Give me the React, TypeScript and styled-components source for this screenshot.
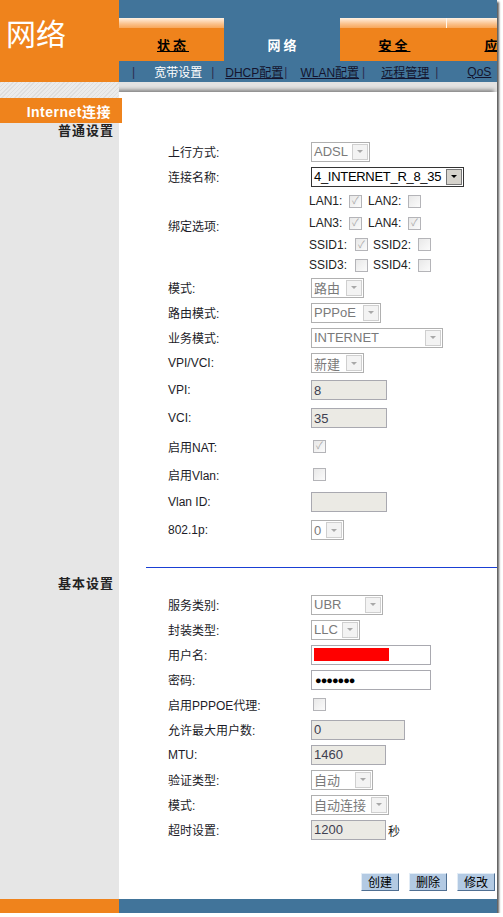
import React from 'react'
import styled, { createGlobalStyle } from 'styled-components'

const ORANGE = '#ef831c'
const BLUE = '#41749a'

const Global = createGlobalStyle`
  html, body { margin: 0; padding: 0; background: #fff; }
  body { font-family: "Liberation Sans", "Noto Sans CJK SC", sans-serif; }
`

const Frame = styled.div`
  width: 497px;
  height: 913px;
  display: grid;
  grid-template-columns: 119px 1fr;
  grid-template-rows: 82px 1fr 14px;
  box-shadow: 2px 2px 2px rgba(0, 0, 0, 0.65);
  overflow: hidden;
`

const Logo = styled.div`
  background: ${ORANGE};
  color: #fff;
  font-family: "Noto Sans CJK SC", sans-serif;
  font-size: 30px;
  line-height: 30px;
  padding: 17px 0 0 6px;
  box-sizing: border-box;
`

const Nav = styled.div`
  background: ${BLUE};
  display: flex;
  flex-direction: column;
  overflow: hidden;
`

const TabRow = styled.div`
  margin-top: 18px;
  height: 43px;
  display: flex;
`

const Tab = styled.div<{ $w: number; $active?: boolean; $sep?: boolean }>`
  flex: none;
  width: ${p => p.$w}px;
  display: flex;
  flex-direction: column;
  &::before {
    content: '';
    height: 10px;
    background: ${p => (p.$active ? 'transparent' : 'linear-gradient(#fff1e2, #fbc18a 60%, #f7a75a)')};
    border-left: ${p => (p.$sep ? '1px solid #fff8ee' : 'none')};
  }
`

const TabLabel = styled.span<{ $active?: boolean }>`
  flex: 1;
  display: flex;
  align-items: center;
  justify-content: center;
  background: ${p => (p.$active ? 'transparent' : ORANGE)};
  color: ${p => (p.$active ? '#fff' : '#000')};
  text-decoration: ${p => (p.$active ? 'none' : 'underline')};
  font-size: 13px;
  font-weight: bold;
  letter-spacing: 3px;
  padding-left: 3px;
`

const SubNav = styled.div`
  height: 21px;
  display: flex;
  align-items: center;
  font-size: 12px;
  white-space: nowrap;
`

const Sep = styled.span<{ $ml: number }>`
  margin-left: ${p => p.$ml}px;
  color: #2c2c4e;
`

const SubLink = styled.span<{ $ml: number; $active?: boolean }>`
  margin-left: ${p => p.$ml}px;
  color: ${p => (p.$active ? '#fff' : '#14142e')};
  text-decoration: ${p => (p.$active ? 'none' : 'underline')};
`

const Side = styled.div`
  background: #e6e6e6;
  display: flex;
  flex-direction: column;
  position: relative;
  z-index: 1;
`

const Hatch = styled.div`
  height: 16px;
  background: repeating-linear-gradient(135deg, #dedede 0 1px, #ebebeb 1px 3px);
`

const SideActive = styled.div`
  height: 25px;
  margin-right: -3px;
  background: ${ORANGE};
  color: #fff;
  font-size: 14px;
  font-weight: bold;
  letter-spacing: 0.5px;
  display: flex;
  align-items: center;
  justify-content: flex-end;
  padding-right: 11px;
`

const SideHead = styled.div<{ $mt: number }>`
  margin-top: ${p => p.$mt}px;
  line-height: 16px;
  font-size: 13px;
  font-weight: bold;
  letter-spacing: 1px;
  color: #222;
  text-align: right;
  padding-right: 5px;
`

const Main = styled.div`
  background: #e2e2e2;
  padding-top: 10px;
  display: flex;
`

const Panel = styled.div`
  flex: 1;
  background: #fff;
  box-shadow: -3px -2px 4px rgba(0, 0, 0, 0.45);
  display: flex;
  flex-direction: column;
`

const Form = styled.div<{ $pt: number }>`
  padding: ${p => p.$pt}px 0 0 49px;
  display: flex;
  flex-direction: column;
`

const Row = styled.div<{ $h: number }>`
  height: ${p => p.$h}px;
  display: flex;
  align-items: center;
`

const Label = styled.div<{ $top?: number }>`
  width: 143px;
  flex: none;
  font-size: 12px;
  color: #1c1c28;
  align-self: ${p => (p.$top ? 'flex-start' : 'auto')};
  padding-top: ${p => p.$top || 0}px;
`

const Rule = styled.div`
  margin: 23px 0 0 27px;
  height: 1px;
  background: #1a3fd4;
`

const SelectBox = styled.div<{ $w: number; $on?: boolean }>`
  width: ${p => p.$w}px;
  height: 20px;
  box-sizing: border-box;
  border: 1px solid ${p => (p.$on ? '#333' : '#b0b0b0')};
  background: #fff;
  display: flex;
  align-items: center;
  font-size: 13px;
  letter-spacing: ${p => (p.$on ? '-0.3px' : '0')};
  color: ${p => (p.$on ? '#000' : '#7a7a7a')};
`

const SelectText = styled.span`
  flex: 1;
  padding-left: 2px;
  white-space: nowrap;
  overflow: hidden;
`

const Arrow = styled.span<{ $on?: boolean }>`
  flex: none;
  width: 16px;
  height: 16px;
  margin-right: 1px;
  box-sizing: border-box;
  border: 1px solid ${p => (p.$on ? '#777' : '#cfcfcf')};
  background: ${p => (p.$on ? '#d6d3cc' : '#f3f3f3')};
  display: flex;
  align-items: center;
  justify-content: center;
  &::after {
    content: '';
    border-left: 3px solid transparent;
    border-right: 3px solid transparent;
    border-top: 3px solid ${p => (p.$on ? '#000' : '#a8a8a8')};
  }
`

const Input = styled.div<{ $w: number; $off?: boolean }>`
  width: ${p => p.$w}px;
  height: 20px;
  box-sizing: border-box;
  border: 1px solid #a9a9b0;
  background: ${p => (p.$off ? '#ebeae4' : '#fff')};
  font-size: 13px;
  color: #404050;
  padding-left: 2px;
  display: flex;
  align-items: center;
`

const Redacted = styled.span`
  width: 75px;
  height: 13px;
  background: #ff0000;
`

const Dots = styled.span`
  font-size: 11px;
  letter-spacing: -1px;
  color: #000;
  padding-left: 1px;
`

const Unit = styled.span`
  font-size: 12px;
  color: #222;
  align-self: flex-end;
  margin: 0 0 3px 2px;
`

const Box = styled.span<{ $on?: boolean; $ml?: number }>`
  flex: none;
  width: 13px;
  height: 13px;
  margin-left: ${p => p.$ml ?? 2}px;
  box-sizing: border-box;
  border: 1px solid #b4b4b8;
  background: linear-gradient(135deg, #e8e8e8, #fbfbfb);
  display: flex;
  align-items: center;
  justify-content: center;
  font-size: 10px;
  line-height: 10px;
  color: #a8a8a8;
  &::after {
    content: '${p => (p.$on ? '\u2713' : '')}';
  }
`

const Binds = styled.div`
  display: flex;
  flex-direction: column;
  padding-top: 1px;
  margin-left: -2px;
`

const BindRow = styled.div<{ $h: number }>`
  height: ${p => p.$h}px;
  display: flex;
  align-items: center;
  font-size: 12px;
  color: #222;
`

const BindLabel = styled.span<{ $w: number; $ml?: number }>`
  width: ${p => p.$w}px;
  margin-left: ${p => p.$ml || 0}px;
  flex: none;
`

const Buttons = styled.div`
  margin: 31px 2px 0 0;
  display: flex;
  justify-content: flex-end;
  gap: 10px;
`

const Button = styled.button`
  width: 38px;
  height: 18px;
  padding: 0;
  font-family: "Noto Sans CJK SC", sans-serif;
  font-size: 12px;
  line-height: 16px;
  color: #000;
  background: #b3cae3;
  border: 1px solid;
  border-color: #e2ecf6 #4f6f92 #4f6f92 #e2ecf6;
`

const FootLeft = styled.div`
  background: ${ORANGE};
  margin-right: -1px;
`
const FootRight = styled.div`
  background: ${BLUE};
`

const Select = ({ w, on, children }: { w: number; on?: boolean; children: React.ReactNode }) => (
  <SelectBox $w={w} $on={on}>
    <SelectText>{children}</SelectText>
    <Arrow $on={on} />
  </SelectBox>
)

const tabs = [
  { name: '状态', w: 105 },
  { name: '网络', w: 116, active: true },
  { name: '安全', w: 106 },
  { name: '应用', w: 106, sep: true },
]

const links = [
  { name: '宽带设置', sep: 13, ml: 19, active: true },
  { name: 'DHCP配置', sep: 9, ml: 11 },
  { name: 'WLAN配置', sep: 1, ml: 13 },
  { name: '远程管理', sep: 3, ml: 16 },
  { name: 'QoS', sep: 6, ml: 29 },
]

export default function App() {
  return (
    <>
      <Global />
      <Frame>
        <Logo>网络</Logo>
        <Nav>
          <TabRow>
            {tabs.map(t => (
              <Tab key={t.name} $w={t.w} $active={t.active} $sep={t.sep}>
                <TabLabel $active={t.active}>{t.name}</TabLabel>
              </Tab>
            ))}
          </TabRow>
          <SubNav>
            {links.map(l => (
              <React.Fragment key={l.name}>
                <Sep $ml={l.sep}>|</Sep>
                <SubLink $ml={l.ml} $active={l.active}>{l.name}</SubLink>
              </React.Fragment>
            ))}
          </SubNav>
        </Nav>

        <Side>
          <Hatch />
          <SideActive>Internet连接</SideActive>
          <SideHead $mt={0}>普通设置</SideHead>
          <SideHead $mt={437}>基本设置</SideHead>
        </Side>

        <Main>
          <Panel>
            <Form $pt={47}>
              <Row $h={25}>
                <Label>上行方式:</Label>
                <Select w={59}>ADSL</Select>
              </Row>
              <Row $h={25}>
                <Label>连接名称:</Label>
                <Select w={153} on>4_INTERNET_R_8_35</Select>
              </Row>
              <Row $h={86}>
                <Label $top={28}>绑定选项:</Label>
                <Binds>
                  <BindRow $h={22}>
                    <BindLabel $w={38}>LAN1:</BindLabel><Box $on />
                    <BindLabel $w={38} $ml={6}>LAN2:</BindLabel><Box />
                  </BindRow>
                  <BindRow $h={22}>
                    <BindLabel $w={38}>LAN3:</BindLabel><Box $on />
                    <BindLabel $w={38} $ml={6}>LAN4:</BindLabel><Box $on />
                  </BindRow>
                  <BindRow $h={21}>
                    <BindLabel $w={44}>SSID1:</BindLabel><Box $on />
                    <BindLabel $w={43} $ml={5}>SSID2:</BindLabel><Box />
                  </BindRow>
                  <BindRow $h={20}>
                    <BindLabel $w={44}>SSID3:</BindLabel><Box />
                    <BindLabel $w={43} $ml={5}>SSID4:</BindLabel><Box />
                  </BindRow>
                </Binds>
              </Row>
              <Row $h={25}>
                <Label>模式:</Label>
                <Select w={53}>路由</Select>
              </Row>
              <Row $h={25}>
                <Label>路由模式:</Label>
                <Select w={70}>PPPoE</Select>
              </Row>
              <Row $h={25}>
                <Label>业务模式:</Label>
                <Select w={132}>INTERNET</Select>
              </Row>
              <Row $h={26}>
                <Label>VPI/VCI:</Label>
                <Select w={53}>新建</Select>
              </Row>
              <Row $h={28}>
                <Label>VPI:</Label>
                <Input $w={76} $off>8</Input>
              </Row>
              <Row $h={28}>
                <Label>VCI:</Label>
                <Input $w={76} $off>35</Input>
              </Row>
              <Row $h={28}>
                <Label>启用NAT:</Label>
                <Box $on />
              </Row>
              <Row $h={28}>
                <Label>启用Vlan:</Label>
                <Box />
              </Row>
              <Row $h={28}>
                <Label>Vlan ID:</Label>
                <Input $w={76} $off />
              </Row>
              <Row $h={28}>
                <Label>802.1p:</Label>
                <Select w={33}>0</Select>
              </Row>
            </Form>

            <Rule />

            <Form $pt={24}>
              <Row $h={25}>
                <Label>服务类别:</Label>
                <Select w={72}>UBR</Select>
              </Row>
              <Row $h={25}>
                <Label>封装类型:</Label>
                <Select w={49}>LLC</Select>
              </Row>
              <Row $h={25}>
                <Label>用户名:</Label>
                <Input $w={120}><Redacted /></Input>
              </Row>
              <Row $h={25}>
                <Label>密码:</Label>
                <Input $w={120}><Dots>●●●●●●●</Dots></Input>
              </Row>
              <Row $h={25}>
                <Label>启用PPPOE代理:</Label>
                <Box />
              </Row>
              <Row $h={25}>
                <Label>允许最大用户数:</Label>
                <Input $w={94} $off>0</Input>
              </Row>
              <Row $h={25}>
                <Label>MTU:</Label>
                <Input $w={75} $off>1460</Input>
              </Row>
              <Row $h={25}>
                <Label>验证类型:</Label>
                <Select w={62}>自动</Select>
              </Row>
              <Row $h={25}>
                <Label>模式:</Label>
                <Select w={78}>自动连接</Select>
              </Row>
              <Row $h={25}>
                <Label>超时设置:</Label>
                <Input $w={75} $off>1200</Input>
                <Unit>秒</Unit>
              </Row>
            </Form>

            <Buttons>
              <Button>创建</Button>
              <Button>删除</Button>
              <Button>修改</Button>
            </Buttons>
          </Panel>
        </Main>

        <FootLeft />
        <FootRight />
      </Frame>
    </>
  )
}
